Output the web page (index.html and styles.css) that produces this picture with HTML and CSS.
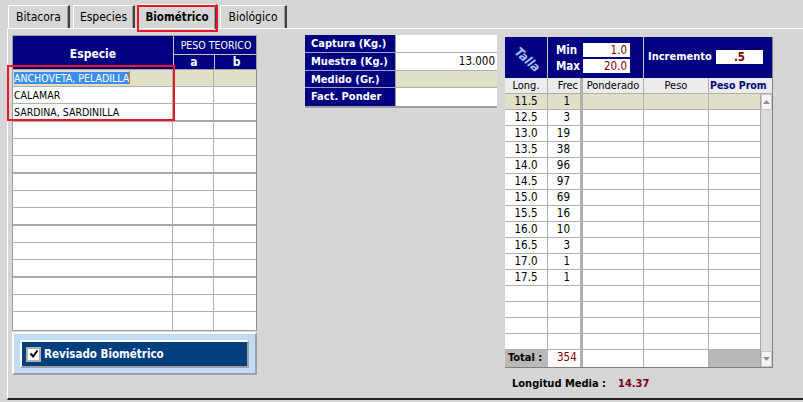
FILE: index.html
```html
<!DOCTYPE html>
<html>
<head>
<meta charset="utf-8">
<link rel="stylesheet" href="styles.css">
</head>
<body>
<div class="app">
  <div class="tabs">
    <div class="tab t1">Bitacora</div>
    <div class="tab t2">Especies</div>
    <div class="tab t3 active">Biométrico</div>
    <div class="tab t4">Biológico</div>
  </div>
  <div class="panel">
    <div class="col-left">
      <div class="shead">
        <div class="sh sh-especie">Especie</div>
        <div class="sh sh-peso">PESO TEORICO</div>
        <div class="sh sh-a">a</div>
        <div class="sh sh-b">b</div>
      </div>
      <div class="sbody">
        <div class="srow sel"><div class="sc c1"><span class="hl">ANCHOVETA, PELADILLA</span><span class="caret"></span></div><div class="sc"></div><div class="sc"></div></div>
        <div class="srow"><div class="sc c1">CALAMAR</div><div class="sc"></div><div class="sc"></div></div>
        <div class="srow"><div class="sc c1">SARDINA, SARDINILLA</div><div class="sc"></div><div class="sc"></div></div>
        <div class="srow"><div class="sc c1"></div><div class="sc"></div><div class="sc"></div></div>
        <div class="srow"><div class="sc c1"></div><div class="sc"></div><div class="sc"></div></div>
        <div class="srow"><div class="sc c1"></div><div class="sc"></div><div class="sc"></div></div>
        <div class="srow"><div class="sc c1"></div><div class="sc"></div><div class="sc"></div></div>
        <div class="srow"><div class="sc c1"></div><div class="sc"></div><div class="sc"></div></div>
        <div class="srow"><div class="sc c1"></div><div class="sc"></div><div class="sc"></div></div>
        <div class="srow"><div class="sc c1"></div><div class="sc"></div><div class="sc"></div></div>
        <div class="srow"><div class="sc c1"></div><div class="sc"></div><div class="sc"></div></div>
        <div class="srow"><div class="sc c1"></div><div class="sc"></div><div class="sc"></div></div>
        <div class="srow"><div class="sc c1"></div><div class="sc"></div><div class="sc"></div></div>
        <div class="srow"><div class="sc c1"></div><div class="sc"></div><div class="sc"></div></div>
        <div class="srow"><div class="sc c1"></div><div class="sc"></div><div class="sc"></div></div>
      </div>
      <div class="revbox">
        <div class="revbtn">
          <span class="chk"><svg width="10" height="10" viewBox="0 0 10 10"><path d="M1.5 4.5 L4 7.5 L8.5 1.5" fill="none" stroke="#000" stroke-width="2"/></svg></span>
          <span class="revlabel">Revisado Biométrico</span>
        </div>
      </div>
    </div>

    <div class="col-mid">
      <div class="mtable">
        <div class="ml">Captura (Kg.)</div><div class="mv"></div>
        <div class="ml">Muestra (Kg.)</div><div class="mv">13.000</div>
        <div class="ml">Medido (Gr.)</div><div class="mv beige"></div>
        <div class="ml last">Fact. Ponder</div><div class="mv last"></div>
      </div>
    </div>

    <div class="col-right">
      <div class="ttable">
        <div class="thead">
          <div class="th-talla"><span class="talla">Talla</span></div>
          <div class="th-minmax">
            <div class="mmrow"><span class="mmlabel">Min</span><span class="mmbox">1.0</span></div>
            <div class="mmrow"><span class="mmlabel">Max</span><span class="mmbox">20.0</span></div>
          </div>
          <div class="th-inc"><span class="inclabel">Incremento</span><span class="incbox">.5</span></div>
        </div>
        <div class="tcols">
          <div class="tch">Long.</div>
          <div class="tch r">Frec</div>
          <div class="tch">Ponderado</div>
          <div class="tch">Peso</div>
          <div class="tch bold">Peso Prom</div>
        </div>
        <div class="tbodywrap">
          <div class="tbody">
            <div class="trow sel"><div class="tc">11.5</div><div class="tc r">1</div><div class="tc"></div><div class="tc"></div><div class="tc"></div></div>
            <div class="trow"><div class="tc">12.5</div><div class="tc r">3</div><div class="tc"></div><div class="tc"></div><div class="tc"></div></div>
            <div class="trow"><div class="tc">13.0</div><div class="tc r">19</div><div class="tc"></div><div class="tc"></div><div class="tc"></div></div>
            <div class="trow"><div class="tc">13.5</div><div class="tc r">38</div><div class="tc"></div><div class="tc"></div><div class="tc"></div></div>
            <div class="trow"><div class="tc">14.0</div><div class="tc r">96</div><div class="tc"></div><div class="tc"></div><div class="tc"></div></div>
            <div class="trow"><div class="tc">14.5</div><div class="tc r">97</div><div class="tc"></div><div class="tc"></div><div class="tc"></div></div>
            <div class="trow"><div class="tc">15.0</div><div class="tc r">69</div><div class="tc"></div><div class="tc"></div><div class="tc"></div></div>
            <div class="trow"><div class="tc">15.5</div><div class="tc r">16</div><div class="tc"></div><div class="tc"></div><div class="tc"></div></div>
            <div class="trow"><div class="tc">16.0</div><div class="tc r">10</div><div class="tc"></div><div class="tc"></div><div class="tc"></div></div>
            <div class="trow"><div class="tc">16.5</div><div class="tc r">3</div><div class="tc"></div><div class="tc"></div><div class="tc"></div></div>
            <div class="trow"><div class="tc">17.0</div><div class="tc r">1</div><div class="tc"></div><div class="tc"></div><div class="tc"></div></div>
            <div class="trow"><div class="tc">17.5</div><div class="tc r">1</div><div class="tc"></div><div class="tc"></div><div class="tc"></div></div>
            <div class="trow"><div class="tc"></div><div class="tc r"></div><div class="tc"></div><div class="tc"></div><div class="tc"></div></div>
            <div class="trow"><div class="tc"></div><div class="tc r"></div><div class="tc"></div><div class="tc"></div><div class="tc"></div></div>
            <div class="trow"><div class="tc"></div><div class="tc r"></div><div class="tc"></div><div class="tc"></div><div class="tc"></div></div>
            <div class="trow"><div class="tc"></div><div class="tc r"></div><div class="tc"></div><div class="tc"></div><div class="tc"></div></div>
            <div class="trow total"><div class="tc tlabel">Total :</div><div class="tc r tval">354</div><div class="tc w"></div><div class="tc w"></div><div class="tc g"></div></div>
          </div>
          <div class="vscroll">
            <div class="sbtn"><svg width="7" height="4" viewBox="0 0 7 4"><path d="M0 4 L3.5 0 L7 4 Z" fill="#909090"/></svg></div>
            <div class="strack"></div>
            <div class="sbtn"><svg width="7" height="4" viewBox="0 0 7 4"><path d="M0 0 L3.5 4 L7 0 Z" fill="#909090"/></svg></div>
          </div>
        </div>
      </div>
      <div class="media"><span class="mlabel">Longitud Media :</span><span class="mvalue">14.37</span></div>
    </div>
  </div>
  <div class="mark mark-tab"></div>
  <div class="mark mark-rows"></div>
</div>
</body>
</html>
```

FILE: styles.css
```css
* { box-sizing: border-box; }
html, body { margin: 0; padding: 0; }
body {
  width: 803px;
  height: 402px;
  overflow: hidden;
  background: #d6d6d6;
  font-family: "DejaVu Sans Condensed", "DejaVu Sans", sans-serif;
  font-stretch: condensed;
  font-size: 11px;
  color: #000;
}
.app { position: relative; width: 803px; height: 402px; }

/* tabs */
.tabs {
  display: flex;
  height: 28px;
  padding: 5px 0 0 8px;
  gap: 3px;
}
.tab {
  height: 23px;
  border-top: 1px solid #fff;
  border-left: 1px solid #fff;
  border-right: 2px solid #404040;
  box-shadow: inset -1px 0 0 #a0a0a0;
  display: flex;
  align-items: center;
  justify-content: center;
  font-size: 12px;
}
.t1 { width: 62px; }
.t2 { width: 62px; }
.t3 { width: 79px; font-weight: bold; font-size: 11.5px; height: 25px; margin-top: -1px; }
.t4 { width: 67px; }

/* panel */
.panel {
  display: flex;
  align-items: flex-start;
  margin-left: 7px;
  height: 372px;
  border-top: 1px solid #fff;
  border-left: 1px solid #fff;
  border-bottom: 2px solid #202020;
}

/* left */
.col-left { margin: 6px 0 0 4px; width: 245px; }
.shead {
  display: grid;
  grid-template-columns: 161px 41px 43px;
  grid-template-rows: 19px 14px;
  background: #000080;
  border: 1px solid #a0a0a0;
  border-bottom: none;
  color: #fff;
}
.sh { display: flex; align-items: center; justify-content: center; }
.sh-especie { grid-row: 1 / 3; font-weight: bold; font-size: 12px; border-right: 1px solid #c0c0c0; padding-top: 2px; }
.sh-peso { grid-column: 2 / 4; font-size: 10.5px; border-bottom: 1px solid #c0c0c0; }
.sh-a { font-weight: bold; font-size: 12px; border-right: 1px solid #c0c0c0; }
.sh-b { font-weight: bold; font-size: 12px; }
.sbody {
  border-left: 1px solid #a0a0a0;
  border-right: 1px solid #909090;
  border-top: 1px solid #a0a0a0;
  border-bottom: 1px solid #a0a0a0;
}
.srow {
  display: grid;
  grid-template-columns: 160px 41px 42px;
  height: 17px;
  background: #fff;
  border-bottom: 1px solid #b0b0b0;
}
.srow:nth-child(3n) { height: 18px; border-bottom: 2px solid #a8a8a8; }
.srow:last-child { border-bottom: none; }
.srow.sel { background: #e1e0c6; }
.sc {
  border-right: 1px solid #b0b0b0;
  padding-left: 1px;
  line-height: 16px;
  font-size: 10.5px;
  white-space: nowrap;
  overflow: hidden;
}
.sc:last-child { border-right: none; }
.hl { background: #3b8ee8; color: #fff; }
.caret { display: inline-block; width: 1px; height: 13px; background: #e08000; vertical-align: -2px; }

.revbox {
  margin-top: 1px;
  height: 43px;
  background: #c2dcf8;
  border-top: 2px solid #fff;
  border-left: 2px solid #fff;
  border-right: 2px solid #a0a0a0;
  border-bottom: 2px solid #a0a0a0;
  padding: 6px 0 0 6px;
}
.revbtn {
  width: 229px;
  height: 28px;
  background: #003e7e;
  border-top: 2px solid #fff;
  border-left: 2px solid #fff;
  border-right: 2px solid #a0a0a0;
  border-bottom: 2px solid #a0a0a0;
  display: flex;
  align-items: center;
  padding-left: 4px;
  gap: 3px;
}
.chk {
  width: 15px;
  height: 15px;
  background: #fff;
  border: 2px solid #b0b0b0;
  display: flex;
  align-items: center;
  justify-content: center;
}
.revlabel { color: #fff; font-weight: bold; font-size: 11.5px; }

/* middle */
.col-mid { margin: 6px 0 0 48px; width: 192px; }
.mtable {
  display: grid;
  grid-template-columns: 91px 101px;
  grid-template-rows: 18px 18px 17px 18px;
  border-right: 1px solid #a0a0a0;
  border-bottom: 2px solid #a0a0a0;
}
.ml {
  background: #000080;
  color: #fff;
  font-weight: bold;
  font-size: 11px;
  padding-left: 6px;
  line-height: 17px;
  border-bottom: 1px solid #a0a0c0;
  border-right: 1px solid #a0a0a0;
  white-space: nowrap;
}
.mv {
  background: #fff;
  border-bottom: 1px solid #b0b0b0;
  text-align: right;
  padding-right: 2px;
  font-size: 11.5px;
  line-height: 17px;
}
.mv.beige { background: #e1e0c6; }
.ml.last, .mv.last { border-bottom: none; }

/* right */
.col-right { margin: 8px 0 0 8px; width: 268px; }
.ttable { border: 1px solid #808080; border-top: none; border-left: none; width: 268px; }
.thead {
  display: grid;
  grid-template-columns: 43px 96px 129px;
  height: 41px;
  background: #000080;
  color: #fff;
}
.th-talla { border-right: 1px solid #c0c0c0; position: relative; overflow: hidden; }
.talla {
  position: absolute;
  left: 8px;
  top: 15px;
  color: #a0c0ff;
  font-weight: bold;
  font-style: italic;
  font-size: 12.5px;
  transform: rotate(42deg);
}
.th-minmax { border-right: 1px solid #c0c0c0; padding-top: 6px; display: flex; flex-direction: column; gap: 2px; }
.mmrow { display: flex; align-items: center; height: 14px; }
.mmlabel { width: 35px; padding-left: 8px; font-weight: bold; font-size: 11.5px; }
.mmbox {
  width: 47px;
  height: 14px;
  background: #fff;
  color: #800000;
  text-align: right;
  font-size: 11.5px;
  line-height: 14px;
  padding-right: 3px;
}
.th-inc { display: flex; align-items: center; padding-left: 4px; padding-bottom: 2px; }
.inclabel { font-weight: bold; font-size: 11px; width: 68px; white-space: nowrap; }
.incbox {
  width: 47px;
  height: 14px;
  background: #fff;
  color: #800000;
  font-weight: bold;
  font-size: 11.5px;
  line-height: 14px;
  text-align: center;
}
.tcols {
  display: grid;
  grid-template-columns: 43px 35px 61px 65px 64px;
  height: 16px;
  background: #ececec;
  border-bottom: 1px solid #b0b0b0;
}
.tch {
  text-align: center;
  line-height: 15px;
  font-size: 11px;
  border-right: 1px solid #b0b0b0;
  white-space: nowrap;
  overflow: hidden;
}
.tch.r { text-align: right; padding-right: 2px; border-right: 3px solid #b0b0b0; }
.tch.bold { font-weight: bold; color: #000080; border-right: none; text-align: left; padding-left: 1px; font-size: 10.5px; }
.tbodywrap { display: flex; }
.tbody { width: 255px; }
.trow {
  display: grid;
  grid-template-columns: 43px 35px 61px 65px 51px;
  height: 16px;
  background: #fff;
  border-bottom: 1px solid #b0b0b0;
}
.trow.sel { background: #e1e0c6; }
.tc {
  border-right: 1px solid #b0b0b0;
  text-align: center;
  font-size: 11.5px;
  line-height: 15px;
}
.tc.r { text-align: right; padding-right: 10px; border-right: 3px solid #b0b0b0; }
.tc:last-child { border-right: none; }
.trow.total { background: #b8b8b8; border-bottom: none; height: 17px; }
.tlabel { font-weight: bold; font-size: 11px; background: #b8b8b8; text-align: left; padding-left: 3px; border-right: none; }
.tval { background: #fff; color: #800000; text-align: left; padding-left: 9px; border-right: 3px solid #b8b8b8; }
.tc.w { background: #fff; }
.tc.g { background: #b8b8b8; }
.vscroll {
  width: 13px;
  display: flex;
  flex-direction: column;
  background: #dcdcdc;
  border-left: 1px solid #a8a8a8;
}
.sbtn {
  height: 16px;
  background: #f4f4f4;
  border: 1px solid #c8c8c8;
  display: flex;
  align-items: center;
  justify-content: center;
}
.strack { flex: 1; }
.media { margin-top: 9px; padding-left: 7px; display: flex; font-weight: bold; font-size: 11px; }
.mlabel { width: 106px; }
.mvalue { color: #7a0020; }

/* annotation overlays */
.mark { position: absolute; border: 2px solid #e8182a; pointer-events: none; }
.mark-tab { left: 137px; top: 5px; width: 81px; height: 27px; }
.mark-rows { left: 7px; top: 65px; width: 168px; height: 56px; }
```
